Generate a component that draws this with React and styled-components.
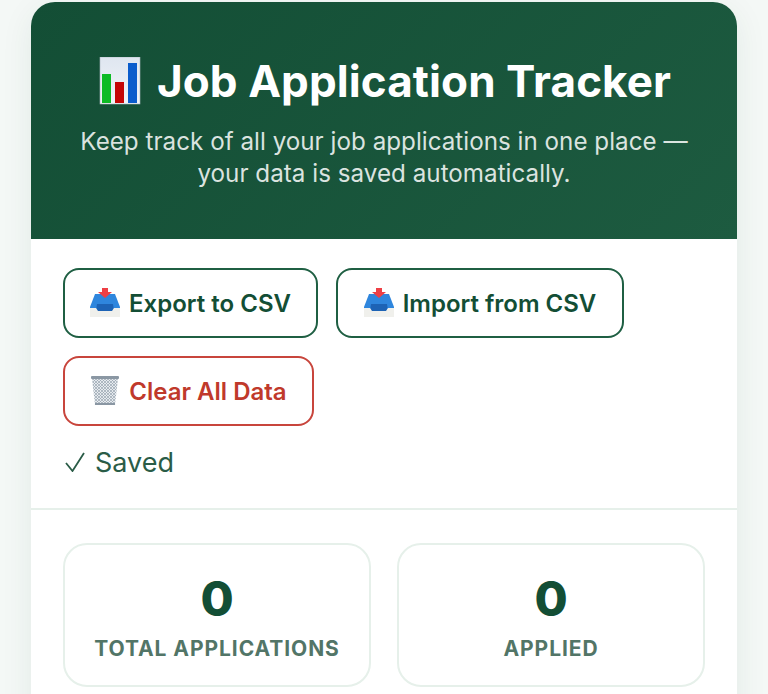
import React from "react";
import styled, { createGlobalStyle } from "styled-components";

const GlobalStyle = createGlobalStyle`
  html, body {
    margin: 0;
    height: 100%;
    overflow: hidden;
    background: #f4f8f6;
    font-family: Inter, "Liberation Sans", sans-serif;
  }
`;

const Page = styled.div`
  padding: 2px 31px 0;
  height: 692px;
  overflow: hidden;
`;

const Card = styled.div`
  height: 720px;
  background: #fff;
  border-radius: 24px 24px 0 0;
  box-shadow: 0 8px 32px rgba(19, 78, 53, 0.08);
  overflow: hidden;
`;

const Header = styled.header`
  height: 237px;
  box-sizing: border-box;
  padding: 49px 32px 0;
  text-align: center;
  color: #fff;
  background: linear-gradient(135deg, #134e35 0%, #1d5b40 100%);
`;

const Title = styled.h1`
  display: flex;
  align-items: center;
  justify-content: center;
  gap: 16px;
  margin: 0 0 15px;
  font-size: 44px;
  line-height: 60px;
  font-weight: 700;
  letter-spacing: 0.09px;
`;

const Subtitle = styled.p`
  margin: 0;
  font-size: 24.2px;
  line-height: 32px;
  letter-spacing: 0.02px;
  color: rgba(255, 255, 255, 0.85);
`;

const Actions = styled.section`
  padding: 29px 32px 28px;
  border-bottom: 2px solid #e6f0ea;
`;

const ButtonRow = styled.div`
  display: flex;
  flex-wrap: wrap;
  gap: 18px;
  width: 620px;
`;

const ActionButton = styled.button`
  display: flex;
  align-items: center;
  justify-content: center;
  gap: 9px;
  width: ${(props) => props.$width}px;
  height: 70px;
  padding: 0;
  background: #fff;
  border: 2px solid ${(props) => (props.$danger ? "#c8453c" : "#1f5f43")};
  border-radius: 16px;
  color: ${(props) => (props.$danger ? "#c0392b" : "#134e35")};
  font-family: inherit;
  font-size: 24px;
  font-weight: 600;
`;

const SaveStatus = styled.div`
  display: flex;
  align-items: center;
  gap: 10px;
  margin-top: 18px;
  padding-left: 2px;
  font-size: 27px;
  line-height: 36px;
  color: #2a5c47;
`;

const SavedText = styled.span`
  padding-top: 2px;
  line-height: 34px;
`;

const Stats = styled.section`
  display: grid;
  grid-template-columns: 308px 308px;
  gap: 26px;
  padding: 33px 32px 0;
`;

const StatCard = styled.div`
  height: 144px;
  box-sizing: border-box;
  padding-top: 24px;
  border: 2px solid #e6f0ea;
  border-radius: 24px;
  text-align: center;
`;

const StatNumber = styled.div`
  font-size: 48px;
  line-height: 60px;
  font-weight: 800;
  color: #134e35;
`;

const StatLabel = styled.div`
  margin-top: 6px;
  font-size: 21px;
  line-height: 28px;
  font-weight: 700;
  letter-spacing: 0.93px;
  color: #527567;
`;

function ChartIcon() {
  return (
    <svg width="44" height="48" viewBox="0 0 44 48">
      <defs>
        <linearGradient id="chartBg" x1="0" y1="0" x2="0" y2="1">
          <stop offset="0" stopColor="#dfe6f0" />
          <stop offset="1" stopColor="#f1f4f8" />
        </linearGradient>
      </defs>
      <rect x="3" y="0" width="40" height="47" fill="url(#chartBg)" stroke="#a9b4bd" strokeWidth="0.6" />
      <rect x="5" y="17" width="9" height="29" fill="#0dbb25" />
      <rect x="18" y="25" width="9" height="21" fill="#c40606" />
      <rect x="31" y="6" width="9" height="40" fill="#0a5ccc" />
    </svg>
  );
}

function TrayIcon() {
  return (
    <svg width="30" height="30" viewBox="0 0 30 30">
      <path d="M5 6h20l5 13v2H0v-2z" fill="#2f86dd" />
      <path d="M7 16h16l1 7H6z" fill="#1d63b5" />
      <path d="M0 20h6l2 3h14l2-3h6v9H0z" fill="#f0f0ec" />
      <path d="M12 0h6v4h4l-7 6-7-6h4z" fill="#ee3f45" />
    </svg>
  );
}

function TrashIcon() {
  return (
    <svg width="30" height="30" viewBox="0 0 30 30">
      <defs>
        <pattern id="mesh" width="3" height="3" patternUnits="userSpaceOnUse">
          <rect width="3" height="3" fill="#e6eaee" />
          <path d="M0 0l3 3M3 0L0 3" stroke="#98a4af" strokeWidth="0.7" />
        </pattern>
      </defs>
      <path d="M2 2h26l-3 27H5z" fill="url(#mesh)" />
      <rect x="1" y="0" width="28" height="3" rx="1" fill="#8a97a3" />
      <rect x="5" y="27" width="20" height="2" fill="#8a97a3" />
    </svg>
  );
}

function CheckIcon() {
  return (
    <svg width="20" height="20" viewBox="0 0 20 20" fill="none">
      <path d="M1 11l6.5 8L19 1" stroke="#2a5c47" strokeWidth="1.8" />
    </svg>
  );
}

export default function App() {
  return (
    <Page>
      <GlobalStyle />
      <Card>
        <Header>
          <Title>
            <ChartIcon />
            Job Application Tracker
          </Title>
          <Subtitle>
            Keep track of all your job applications in one place — your data is
            saved automatically.
          </Subtitle>
        </Header>
        <Actions>
          <ButtonRow>
            <ActionButton $width={255}>
              <TrayIcon />
              Export to CSV
            </ActionButton>
            <ActionButton $width={288}>
              <TrayIcon />
              Import from CSV
            </ActionButton>
            <ActionButton $width={251} $danger>
              <TrashIcon />
              Clear All Data
            </ActionButton>
          </ButtonRow>
          <SaveStatus>
            <CheckIcon />
            <SavedText>Saved</SavedText>
          </SaveStatus>
        </Actions>
        <Stats>
          <StatCard>
            <StatNumber>0</StatNumber>
            <StatLabel>TOTAL APPLICATIONS</StatLabel>
          </StatCard>
          <StatCard>
            <StatNumber>0</StatNumber>
            <StatLabel>APPLIED</StatLabel>
          </StatCard>
        </Stats>
      </Card>
    </Page>
  );
}
